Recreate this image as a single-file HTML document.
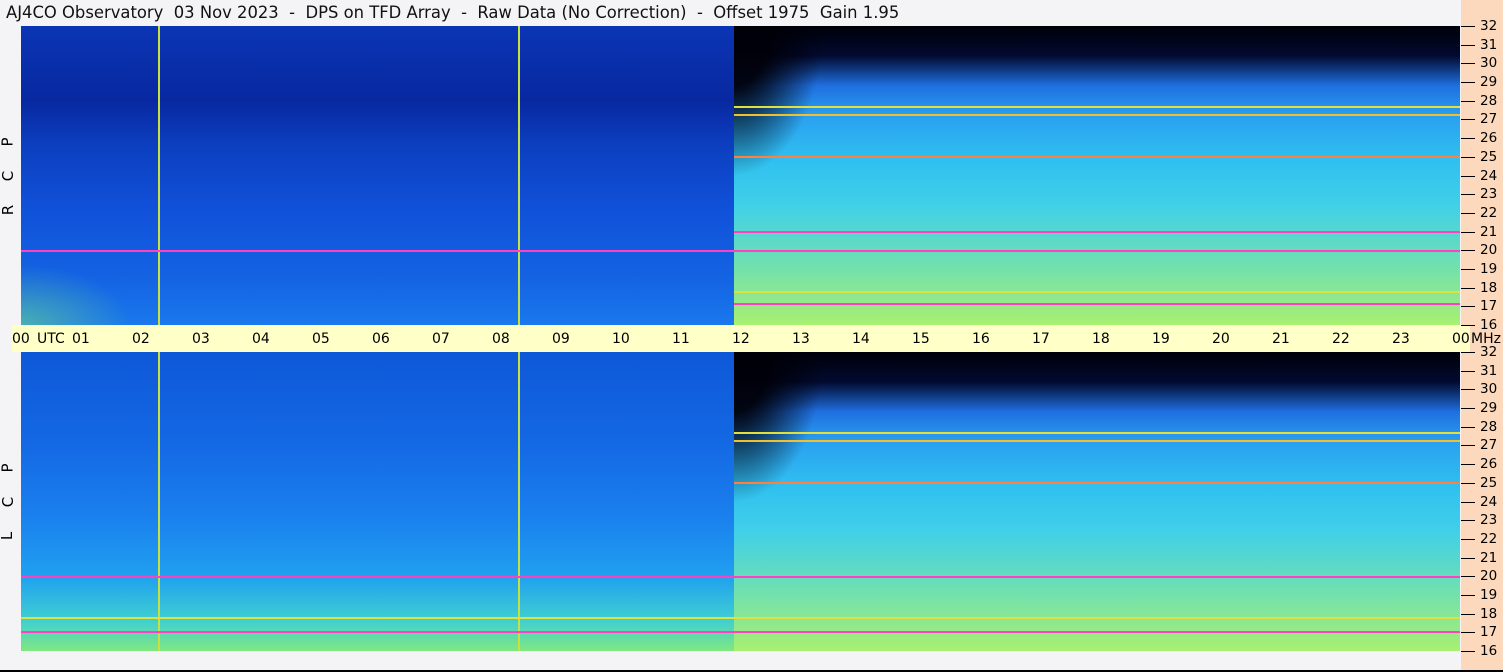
<!DOCTYPE html>
<html><head><style>
body{margin:0;width:1503px;height:672px;background:#f4f4f6;position:relative;overflow:hidden;font-family:"DejaVu Sans","Liberation Sans",sans-serif;}
.t{position:absolute;left:6px;top:3px;font-size:16.4px;color:#111;white-space:pre;}
.rp{position:absolute;left:1461px;top:0;width:42px;height:672px;background:#fcd9bc;}
.ax{position:absolute;left:12px;top:325px;width:1458px;height:27px;background:#ffffc8;}
.plot{position:absolute;left:21px;width:1439px;height:299px;overflow:hidden;}
.l{position:absolute;left:0;top:0;width:713px;height:100%;}
.r{position:absolute;left:713px;top:0;width:726px;height:100%;}
.h{position:absolute;height:2px;}
.v{position:absolute;top:0;width:2px;height:100%;background:#c8e040;}
.lab{position:absolute;font-size:14px;color:#000;}
.tk{position:absolute;width:14px;height:1px;background:#000;left:1461px;}
.fl{position:absolute;left:1480px;font-size:13.5px;}
.side{position:absolute;left:3px;font-size:15px;transform:rotate(-90deg);}
</style></head><body>
<div class="t">AJ4CO Observatory  03 Nov 2023  -  DPS on TFD Array  -  Raw Data (No Correction)  -  Offset 1975  Gain 1.95</div>
<div class="rp"></div>
<div class="ax"></div>
<div style="position:absolute;left:0;top:670px;width:1503px;height:2px;background:#000"></div>

<div class="plot" style="top:26px">
 <div class="l" style="background:radial-gradient(ellipse 110px 60px at 0% 100%,rgba(120,230,120,.5),rgba(0,0,0,0)),linear-gradient(180deg,#0b35b5 0%,#0828a0 25%,#0c3fc0 40%,#1050d8 60%,#1464e4 85%,#1a78ec 100%)"></div>
 <div class="r" style="background:radial-gradient(ellipse 90px 150px at 0% 0%,rgba(0,0,8,.95) 40%,rgba(0,0,0,0)),linear-gradient(180deg,#000008 0%,#020a30 10%,#1f6fe0 20%,#2aa0f0 30%,#30c0f0 45%,#40d0e8 60%,#70e0b0 80%,#a8f070 100%)"></div>
 <div class="v" style="left:137px"></div><div class="v" style="left:497px"></div>
 <div class="h" style="left:713px;width:726px;top:80px;background:#e0e040"></div>
 <div class="h" style="left:713px;width:726px;top:88px;background:#f0c030"></div>
 <div class="h" style="left:713px;width:726px;top:130px;background:#ff8040"></div>
 <div class="h" style="left:713px;width:726px;top:205px;background:#ff40c0"></div>
 <div class="h" style="left:0;width:1439px;top:224px;background:#ff40c0"></div>
 <div class="h" style="left:713px;width:726px;top:265px;background:#e0e040"></div>
 <div class="h" style="left:713px;width:726px;top:277px;background:#ff40c0"></div>
</div>
<div class="plot" style="top:352px">
 <div class="l" style="background:linear-gradient(180deg,#0e58d8 0%,#1468e4 30%,#1a80ee 55%,#20a0f0 75%,#40d0d0 90%,#80e880 100%)"></div>
 <div class="r" style="background:radial-gradient(ellipse 90px 150px at 0% 0%,rgba(0,0,8,.95) 40%,rgba(0,0,0,0)),linear-gradient(180deg,#000008 0%,#020a30 10%,#1f6fe0 20%,#2aa0f0 30%,#30c0f0 45%,#40d0e8 60%,#70e0b0 80%,#a8f070 100%)"></div>
 <div class="v" style="left:137px"></div><div class="v" style="left:497px"></div>
 <div class="h" style="left:713px;width:726px;top:80px;background:#e0e040"></div>
 <div class="h" style="left:713px;width:726px;top:88px;background:#f0c030"></div>
 <div class="h" style="left:713px;width:726px;top:130px;background:#ff8040"></div>
 <div class="h" style="left:0;width:1439px;top:224px;background:#ff40c0"></div>
 <div class="h" style="left:0;width:1439px;top:265px;background:#e0e040"></div>
 <div class="h" style="left:0;width:1439px;top:279px;background:#ff40c0"></div>
</div>

<div class="side" style="top:133px">P</div><div class="side" style="top:167px">C</div><div class="side" style="top:201px">R</div>
<div class="side" style="top:459px">P</div><div class="side" style="top:493px">C</div><div class="side" style="top:527px">L</div>

<div id="labs"></div>
<script>
var s='';
for(var h=0;h<=24;h++){var x=20+60*h;var t=(h%24<10?'0':'')+(h%24);
s+='<div class="lab" style="left:'+(x-8)+'px;top:331px">'+t+'</div>';}
s+='<div class="lab" style="left:37px;top:331px">UTC</div><div class="lab" style="left:1471px;top:331px">MHz</div>';
[26,352].forEach(function(y0){for(var f=16;f<=32;f++){var y=Math.round(y0+(32-f)*18.69);
s+='<div class="tk" style="top:'+y+'px"></div>';
s+='<div class="fl" style="top:'+(y-8)+'px">'+f+'</div>';}});
document.getElementById('labs').innerHTML=s;
</script>
</body></html>
